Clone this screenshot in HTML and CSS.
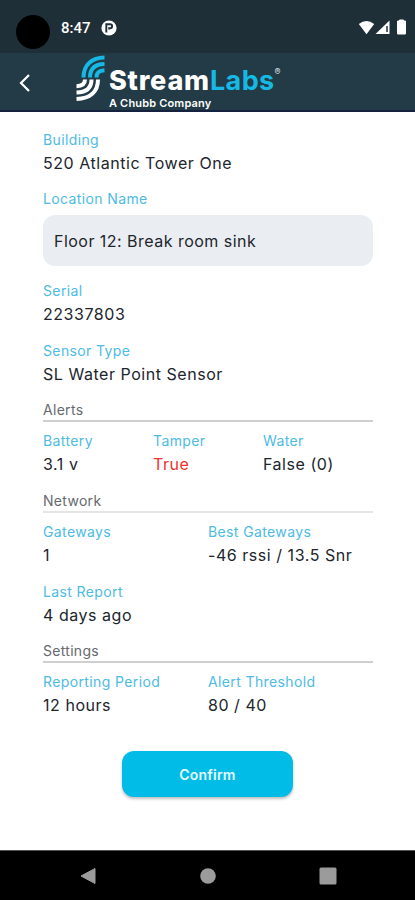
FILE: index.html
```html
<!DOCTYPE html>
<html lang="en">
<head>
<meta charset="utf-8">
<title>StreamLabs</title>
<link rel="stylesheet" href="styles.css">
</head>
<body>
<div class="screen">
  <div class="status">
    <span class="camera"></span>
    <span class="time">8:47</span>
    <svg class="notice" width="16" height="16" viewBox="0 0 16 16"><circle cx="8" cy="8" r="7.6" fill="#fff"/><path d="M5.3 12.5V4.300H9.200a1.900 1.900 0 0 1 0 3.800H8.200V9.500" fill="none" stroke="#1f2f38" stroke-width="1.900"/></svg>
    <svg class="signals" width="50" height="18" viewBox="0 0 50 18"><path d="M.8 5Q8.500-1 16.200 5L8.500 15.200Z" fill="#fff"/><path d="M31.500 1.500V15H17.500Z" fill="#fff"/><path d="M29 7v6" stroke="#1f2f38" stroke-width="1.500"/><path d="M39.500 2h2V1h4v1h2v13h-8Z" fill="#fff" stroke="#fff" stroke-linejoin="round"/></svg>
  </div>
  <header class="bar">
    <svg class="back" width="12" height="20" viewBox="0 0 12 20"><path d="M10 2 2 10l8 8" fill="none" stroke="#fff" stroke-width="2.200"/></svg>
    <svg class="mark" width="30" height="48" viewBox="0 0 30 48" fill="none" stroke-width="4">
      <g stroke="#16b9e5"><path d="M7.500 23.500C7.500 10.500 16 3.800 28.500 3.600"/><path d="M14 23.500C14 14.500 19 10.200 28.500 10"/><path d="M20.500 23.500C20.500 18.500 23 16.600 28.500 16.300"/></g>
      <g stroke="#fff"><path d="M22 25.500C22 38 14 44.500 .500 45"/><path d="M15.500 25.500C15.500 33.500 10.500 38.300 .500 38.600"/><path d="M9 25.500C9 29.500 6.500 32 .500 32.200"/></g>
    </svg>
    <div class="brand">
      <div class="name">Stream<span class="labs">Labs</span><span class="reg">®</span></div>
      <div class="tagline">A Chubb Company</div>
    </div>
  </header>
  <main class="content">
    <div class="item"><div class="label">Building</div><div class="value">520 Atlantic Tower One</div></div>
    <div class="item editable"><label class="label" for="location">Location Name</label><input class="field" id="location" value="Floor 12: Break room sink"></div>
    <div class="item"><div class="label">Serial</div><div class="value">22337803</div></div>
    <div class="item"><div class="label">Sensor Type</div><div class="value">SL Water Point Sensor</div></div>
    <h2 class="heading">Alerts</h2>
    <div class="row thirds">
      <div class="item"><div class="label">Battery</div><div class="value">3.1 v</div></div>
      <div class="item"><div class="label">Tamper</div><div class="value danger">True</div></div>
      <div class="item"><div class="label">Water</div><div class="value">False (0)</div></div>
    </div>
    <h2 class="heading light">Network</h2>
    <div class="row halves">
      <div class="item"><div class="label">Gateways</div><div class="value">1</div></div>
      <div class="item"><div class="label">Best Gateways</div><div class="value">-46 rssi / 13.5 Snr</div></div>
    </div>
    <div class="item"><div class="label">Last Report</div><div class="value">4 days ago</div></div>
    <h2 class="heading">Settings</h2>
    <div class="row halves">
      <div class="item"><div class="label">Reporting Period</div><div class="value">12 hours</div></div>
      <div class="item"><div class="label">Alert Threshold</div><div class="value">80 / 40</div></div>
    </div>
    <button class="confirm">Confirm</button>
  </main>
  <nav class="nav">
    <svg width="18" height="18" viewBox="0 0 18 18"><path d="M16 1.500v15L2 9Z" fill="#9b9b9b" stroke="#9b9b9b" stroke-linejoin="round"/></svg>
    <svg width="18" height="18" viewBox="0 0 18 18"><circle cx="9" cy="9" r="7.800" fill="#9b9b9b"/></svg>
    <svg width="18" height="18" viewBox="0 0 18 18"><rect x=".5" y=".5" width="17" height="17" rx="1.500" fill="#9b9b9b"/></svg>
  </nav>
</div>
</body>
</html>
```

FILE: styles.css
```css
* { box-sizing: border-box; }
body { margin: 0; font-family: Inter, sans-serif; background: #fff; }
.screen { width: 415px; height: 900px; display: flex; flex-direction: column; overflow: hidden; }
.status { height: 53px; flex: none; background: #1f2f38; display: flex; align-items: center; padding: 2px 7px 0 16px; color: #fff; }
.camera { width: 34px; height: 34px; border-radius: 50%; background: #000; margin-top: 9px; }
.time { font: 500 15px/20px Roboto, sans-serif; margin-left: 11px; width: 30px; letter-spacing: 0; white-space: nowrap; }
.notice { margin-left: 10px; }
.signals { margin-left: auto; }
.bar { height: 59px; flex: none; background: #223b46; border-bottom: 2px solid #14213f; display: flex; padding-left: 19px; color: #fff; }
.back { margin-top: 20px; }
.mark { margin: 1px 0 0 45px; }
.brand { margin-left: 3px; padding-top: 12px; }
.name { display: flex; height: 31px; font-size: 27px; line-height: 31px; font-weight: 800; letter-spacing: 0.8px; white-space: nowrap; }
.labs { font-weight: 700; color: #16b9e5; letter-spacing: 0.4px; }
.reg { font-size: 9px; line-height: 14px; font-weight: 500; letter-spacing: 0; color: #cdd8dd; }
.tagline { font-size: 11px; line-height: 14px; font-weight: 600; letter-spacing: 0.17px; white-space: nowrap; }
.content { flex: 1; padding: 18px 42px 0 43px; display: flex; flex-direction: column; }
.item { margin-bottom: 12.3px; }
.label { display: block; height: 20px; font-size: 14px; line-height: 20px; letter-spacing: 0.38px; color: #4dbbe3; white-space: nowrap; }
.value { height: 27px; font-size: 16px; line-height: 27px; letter-spacing: 0.54px; color: #20252c; white-space: nowrap; }
.danger { color: #ee322d; }
.editable { margin-bottom: 15.100px; }
.field { display: block; width: 100%; height: 51px; margin-top: 6px; padding: 0 11px; border: 0; border-radius: 12px; background: #eaeef2; font: 16px Inter, sans-serif; letter-spacing: 0.47px; color: #20252c; outline: 0; }
.heading { margin: 0 0 9px; height: 22.500px; border-bottom: 2px solid #cfcfcf; font-size: 14px; line-height: 20px; font-weight: 400; letter-spacing: 0.3px; color: #666a6e; }
.light { border-color: #e4e4e4; }
.row { display: grid; }
.thirds { grid-template-columns: repeat(3, 1fr); }
.halves { grid-template-columns: repeat(2, 1fr); }
.confirm { align-self: center; width: 171px; height: 46px; margin: 19.500px 1px 0 0; border: 0; border-radius: 12px; background: #00bce7; color: #e9faff; font: 600 14px Inter, sans-serif; letter-spacing: 0.2px; box-shadow: 0 2px 3px rgba(0,0,0,.25); }
.nav { height: 50px; flex: none; background: #000; border-top: 1px solid #555; display: flex; align-items: center; justify-content: space-between; padding: 0 78px 0 79px; }
```
